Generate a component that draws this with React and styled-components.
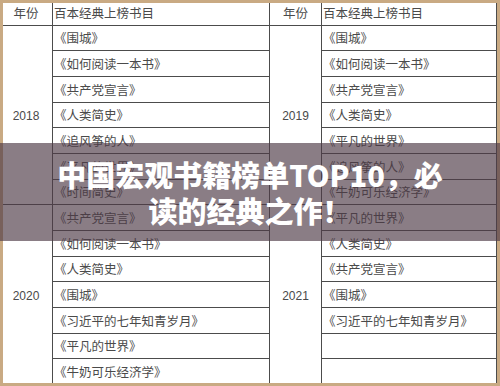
import React from "react";
import styled, { createGlobalStyle } from "styled-components";

const GlobalStyle = createGlobalStyle`
	html, body {
		margin: 0;
		padding: 0;
		background: #ffffff;
	}
`;

const Page = styled.div`
	position: relative;
	width: 500px;
	height: 386px;
	overflow: hidden;
	background: #ffffff;
	font-family: "Noto Sans CJK SC", "Noto Sans", sans-serif;
`;

const Sheet = styled.div`
	display: flex;
	width: 497px;
`;

const Table = styled.div`
	display: grid;
	grid-template-columns: ${props => (props.first ? "53px 217px" : "52px 175px")};
	grid-template-rows: repeat(15, 25.67px);
`;

const Cell = styled.div`
	display: flex;
	align-items: center;
	justify-content: ${props => (props.center ? "center" : "flex-start")};
	border-right: 1px solid #4c4c4c;
	border-bottom: 1px solid #4c4c4c;
	font-size: 12.5px;
	color: #4a4a4a;
	white-space: nowrap;
	overflow: hidden;
	padding-left: ${props => (props.center ? "0" : "1px")};
`;

const YearCell = styled(Cell)`
	grid-row: span 7;
	font-family: "Liberation Sans", sans-serif;
	font-size: 12px;
	padding-top: 2px;
`;

const Frame = styled.div`
	position: absolute;
	inset: 0;
	border: 3px solid #c9aa83;
	pointer-events: none;
`;

const Banner = styled.div`
	position: absolute;
	left: 0;
	right: 0;
	top: 143px;
	height: 98px;
	display: flex;
	align-items: center;
	justify-content: center;
	background: rgba(78, 58, 70, 0.66);
`;

const Title = styled.h1`
	margin: 0;
	font-family: "Noto Sans CJK SC", "Noto Sans", sans-serif;
	font-weight: 900;
	font-size: 29px;
	line-height: 36px;
	color: #ffffff;
	text-align: center;
`;

const tables = [
	{
		first: true,
		years: [
			{
				year: "2018",
				books: ["《围城》", "《如何阅读一本书》", "《共产党宣言》", "《人类简史》", "《追风筝的人》", "《平凡的世界》", "《时间简史》"]
			},
			{
				year: "2020",
				books: ["《共产党宣言》", "《如何阅读一本书》", "《人类简史》", "《围城》", "《习近平的七年知青岁月》", "《平凡的世界》", "《牛奶可乐经济学》"]
			}
		]
	},
	{
		first: false,
		years: [
			{
				year: "2019",
				books: ["《围城》", "《如何阅读一本书》", "《共产党宣言》", "《人类简史》", "《平凡的世界》", "《追风筝的人》", "《牛奶可乐经济学》"]
			},
			{
				year: "2021",
				books: ["《平凡的世界》", "《人类简史》", "《共产党宣言》", "《围城》", "《习近平的七年知青岁月》", "", ""]
			}
		]
	}
];

const YearTable = ({ first, years }) => (
	<Table first={first}>
		<Cell center>年份</Cell>
		<Cell>百本经典上榜书目</Cell>
		{years.map(group => (
			<React.Fragment key={group.year}>
				<YearCell center style={{ gridColumn: 1 }}>
					{group.year}
				</YearCell>
				{group.books.map((book, i) => (
					<Cell key={i} style={{ gridColumn: 2 }}>
						{book}
					</Cell>
				))}
			</React.Fragment>
		))}
	</Table>
);

export default function App() {
	return (
		<Page>
			<GlobalStyle />
			<Sheet>
				{tables.map((t, i) => (
					<YearTable key={i} first={t.first} years={t.years} />
				))}
			</Sheet>
			<Frame />
			<Banner>
				<Title>
					中国宏观书籍榜单TOP10，必
					<br />
					读的经典之作！
				</Title>
			</Banner>
		</Page>
	);
}
